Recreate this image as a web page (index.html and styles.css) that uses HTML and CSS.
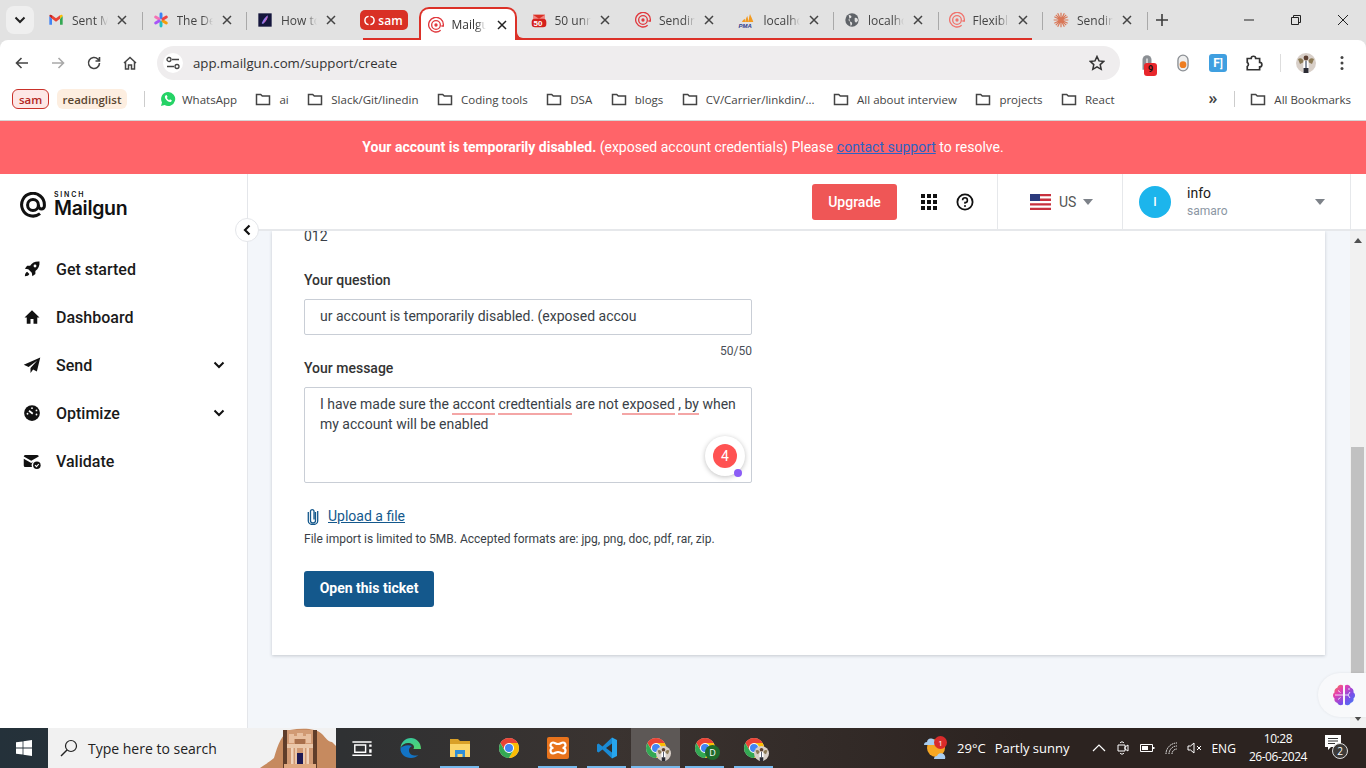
FILE: index.html
```html
<!DOCTYPE html>
<html lang="en">
<head>
  <meta charset="UTF-8">
  <title>Mailgun - Support</title>
  <link rel="stylesheet" href="styles.css">
</head>
<body>
  <!-- Shared icons -->
  <svg class="sprite" xmlns="http://www.w3.org/2000/svg">
    <symbol id="folder" viewBox="0 0 16 16"><path d="M1.500 3.500h4.200l1.600 1.600h7.200v8.400h-13z" fill="none" stroke="currentColor" stroke-width="1.500"/></symbol>
    <symbol id="close" viewBox="0 0 10 10"><path d="M1 1l8 8M9 1l-8 8" fill="none" stroke="currentColor" stroke-width="1.500"/></symbol>
    <symbol id="mg" viewBox="0 0 24 24"><path d="M18.500 20A10.500 10.500 0 1 1 22.500 12v1a2.700 2.700 0 0 1-5.400 0v-1" fill="none" stroke="currentColor" stroke-width="2.800"/><circle cx="12" cy="12" r="5" fill="none" stroke="currentColor" stroke-width="2.800"/></symbol>
    <symbol id="mg-tab" viewBox="0 0 24 24"><path d="M19 20A11 11 0 1 1 23 12v1.500h-3" fill="none" stroke="currentColor" stroke-width="2"/><circle cx="12" cy="12" r="6.500" fill="none" stroke="currentColor" stroke-width="2"/><circle cx="12" cy="12" r="2.500" fill="currentColor"/></symbol>
    <symbol id="chrome" viewBox="0 0 24 24"><circle cx="12" cy="12" r="10" fill="#fff"/><path d="M3.340 7A10 10 0 0 1 20.660 7H12a5 5 0 0 0-4.330 7.500z" fill="#ea4335"/><path d="M20.660 7A10 10 0 0 1 12 22l4.330-7.500A5 5 0 0 0 12 7z" fill="#fbbc04"/><path d="M12 22A10 10 0 0 1 3.340 7l4.330 7.500a5 5 0 0 0 8.660 0z" fill="#34a853"/><circle cx="12" cy="12" r="4" fill="#4285f4"/></symbol>
    <symbol id="caret" viewBox="0 0 10 6"><path d="M0 0h10L5 6z" fill="currentColor"/></symbol>
    <symbol id="chev" viewBox="0 0 12 8"><path d="M1.500 1.500 6 6l4.500-4.500" fill="none" stroke="currentColor" stroke-width="2"/></symbol>
    <symbol id="profile" viewBox="0 0 20 20"><circle cx="10" cy="10" r="10" fill="#d8cfc8"/><path d="M2 6c3-2 5 0 6 3l-4 2zM18 6c-3-2-5 0-6 3l4 2z" fill="#8c7a55"/><circle cx="10" cy="5" r="2.400" fill="#5b3f31"/><path d="M7.500 8h5l.5 12H7z" fill="#fff"/><path d="M9.500 8h1v7h-1z" fill="#1f2a44"/><path d="M7.500 15h5v5h-5z" fill="#2b2b33"/></symbol>
  </svg>

  <!-- Tab strip -->
  <header class="tabstrip">
    <button class="tab-search"><svg class="ico-12"><use href="#chev"/></svg></button>
    <div class="tab">
      <svg class="tab-ico" viewBox="0 0 24 24"><path d="M2 6v13h4V10z" fill="#4285f4"/><path d="M18 10v9h4V6z" fill="#34a853"/><path d="M6 10V5l6 4.500L18 5v5l-6 4.500z" fill="#ea4335"/><path d="M2 6c0-2 2-2.500 4-1v5z" fill="#c5221f"/><path d="M22 6c0-2-2-2.500-4-1v5z" fill="#fbbc04"/></svg>
      <span class="tab-title">Sent Mail</span>
      <svg class="tab-x"><use href="#close"/></svg>
    </div>
    <div class="tab">
      <svg class="tab-ico" viewBox="0 0 24 24"><g fill="none" stroke-width="4.400" stroke-linecap="round"><path d="M12 3v6" stroke="#3b82f6"/><path d="M12 15v6" stroke="#22c1c3"/><path d="M4 7.500l5 3" stroke="#f472b6"/><path d="M15 13.500l5 3" stroke="#f59e0b"/><path d="M20 7.500l-5 3" stroke="#ef4444"/><path d="M9 13.500l-5 3" stroke="#a855f7"/></g></svg>
      <span class="tab-title">The Dev</span>
      <svg class="tab-x"><use href="#close"/></svg>
    </div>
    <div class="tab no-sep">
      <svg class="tab-ico" viewBox="0 0 24 24"><path d="M2 2h20v20H2z" fill="#14163c"/><path d="M16 5c1 4-2 9-7 13l-2-1c2-5 5-9 9-12z" fill="#8f7df0"/><path d="M15 7c0 3-2 6-5 9" stroke="#ef4f8b" fill="none"/></svg>
      <span class="tab-title">How to</span>
      <svg class="tab-x"><use href="#close"/></svg>
    </div>

    <div class="tab-group">
      <span class="group-chip"><svg class="ico-11" viewBox="0 0 12 12"><path d="M5 1.500C2 2 1 4 1 6s1 4 4 4.500M7 1.500c3 .5 4 2.500 4 4.500s-1 4-4 4.500" fill="none" stroke="#fff" stroke-width="1.600"/></svg>sam</span>
      <div class="tab active">
        <svg class="tab-ico mg-red"><use href="#mg-tab"/></svg>
        <span class="tab-title">Mailgun</span>
        <svg class="tab-x"><use href="#close"/></svg>
      </div>
      <div class="tab no-sep">
        <svg class="tab-ico" viewBox="0 0 24 24"><path d="M3 4h18v10H3z" fill="#ee8a86"/><path d="M3 4l9 6 9-6" fill="#d93025"/><rect x="1" y="10" width="22" height="13" rx="5" fill="#d5211c"/></svg>
        <span class="tab-badge">50</span>
        <span class="tab-title">50 unread</span>
        <svg class="tab-x"><use href="#close"/></svg>
      </div>
      <div class="tab no-sep">
        <svg class="tab-ico mg-red"><use href="#mg-tab"/></svg>
        <span class="tab-title">Sending</span>
        <svg class="tab-x"><use href="#close"/></svg>
      </div>
      <div class="tab">
        <svg class="tab-ico" viewBox="0 0 24 24"><path d="M3 15c1-3 3-4 4-5l1 5zM8 15c0-4 2-7 3-9l2 9zM13 15c0-4 1-9 2-12 1 3 4 8 5 12z" fill="#f29a1f"/></svg>
        <span class="tab-pma">PMA</span>
        <span class="tab-title">localhost</span>
        <svg class="tab-x"><use href="#close"/></svg>
      </div>
      <div class="tab">
        <svg class="tab-ico" viewBox="0 0 24 24"><circle cx="12" cy="12" r="10" fill="#5f6368"/><path d="M7 4c3 1 5 2 4 4s-4 1-4 4 4 2 5 4-1 4-2 5M16 9c3-1 5 1 5 4l-3 3-2-2z" fill="#e1e1e1"/></svg>
        <span class="tab-title">localhost</span>
        <svg class="tab-x"><use href="#close"/></svg>
      </div>
      <div class="tab">
        <svg class="tab-ico mg-salmon"><use href="#mg-tab"/></svg>
        <span class="tab-title">Flexible</span>
        <svg class="tab-x"><use href="#close"/></svg>
      </div>
    </div>

    <div class="tab">
      <svg class="tab-ico" viewBox="0 0 24 24"><path d="M12 1v22M1 12h22M4.200 4.200l15.600 15.600M19.800 4.200 4.200 19.800M7 2l10 20M17 2 7 22M2 7l20 10M22 7 2 17" stroke="#d97757" stroke-width="1.800"/></svg>
      <span class="tab-title">Sending</span>
      <svg class="tab-x"><use href="#close"/></svg>
    </div>
    <svg class="tab-new" viewBox="0 0 12 12"><path d="M6 0v12M0 6h12" stroke="#3c3c3c" stroke-width="1.600"/></svg>

    <div class="win-controls">
      <svg viewBox="0 0 12 12"><path d="M1 6h10" stroke="#222" stroke-width="1"/></svg>
      <svg viewBox="0 0 12 12"><path d="M1.500 3.500h7v7h-7zM3.500 3.500v-2h7v7h-2" fill="none" stroke="#222" stroke-width="1"/></svg>
      <svg viewBox="0 0 12 12"><path d="M1 1l10 10M11 1 1 11" stroke="#222" stroke-width="1"/></svg>
    </div>
  </header>

  <!-- Address bar -->
  <div class="toolbar">
    <svg class="tool" viewBox="0 0 16 16"><path d="M14 8H3M7.500 3 2.500 8l5 5" fill="none" stroke="#444" stroke-width="1.600"/></svg>
    <svg class="tool" viewBox="0 0 16 16"><path d="M2 8h11M8.500 3l5 5-5 5" fill="none" stroke="#a9a9a9" stroke-width="1.600"/></svg>
    <svg class="tool" viewBox="0 0 16 16"><path d="M13.500 8a5.500 5.500 0 1 1-1.600-3.900L13.500 6M13.500 2v4h-4" fill="none" stroke="#444" stroke-width="1.600"/></svg>
    <svg class="tool" viewBox="0 0 16 16"><path d="M2 8l6-5.500L14 8M3.500 7v7h3v-4h3v4h3V7" fill="none" stroke="#444" stroke-width="1.500"/></svg>
    <div class="omnibox">
      <span class="site-info"><svg class="ico-14" viewBox="0 0 14 14"><path d="M6 3.500h7M1 10.500h7" stroke="#444" stroke-width="1.400"/><circle cx="3" cy="3.500" r="2" fill="none" stroke="#444" stroke-width="1.300"/><circle cx="11" cy="10.500" r="2" fill="none" stroke="#444" stroke-width="1.300"/></svg></span>
      <span class="url">app.mailgun.com/support/create</span>
      <svg class="star" viewBox="0 0 16 16"><path d="M8 1.500l2 4.400 4.800.5-3.600 3.200 1 4.700L8 11.900l-4.200 2.400 1-4.700L1.200 6.400 6 5.900z" fill="none" stroke="#333" stroke-width="1.500"/></svg>
    </div>
    <div class="extensions">
      <span class="ext ext-lock"><svg viewBox="0 0 16 16"><path d="M4 14V5a4 4 0 0 1 8 0v9z" fill="#8b8f94"/><path d="M7.500 4h1v4h-1z" fill="#fff"/></svg><b class="ext-count">9</b></span>
      <span class="ext"><svg viewBox="0 0 16 16"><rect x="3.500" y="1" width="9" height="14" rx="4.500" fill="#eee" stroke="#8b8f94" stroke-width="1.200"/><circle cx="8" cy="9.500" r="3" fill="#ee7d20"/></svg></span>
      <span class="ext ext-blue">F<i>]</i></span>
      <span class="ext"><svg viewBox="0 0 16 16"><path d="M2 4h3.500a2 2 0 0 1 4 0H13v3.500a2 2 0 0 1 0 4V14H2v-3a2 2 0 0 0 0-3.500z" fill="none" stroke="#333" stroke-width="1.500"/></svg></span>
      <span class="tool-sep"></span>
      <svg class="avatar-small"><use href="#profile"/></svg>
      <svg class="kebab" viewBox="0 0 4 16"><circle cx="2" cy="2.500" r="1.500" fill="#444"/><circle cx="2" cy="8" r="1.500" fill="#444"/><circle cx="2" cy="13.500" r="1.500" fill="#444"/></svg>
    </div>
  </div>

  <!-- Bookmarks -->
  <nav class="bookmarks">
    <span class="bm-chip chip-sam">sam</span>
    <span class="bm-chip chip-reading">readinglist</span>
    <span class="bm-sep"></span>
    <span class="bm bm-wa"><svg class="bm-ico" viewBox="0 0 16 16"><path d="M8 1a7 7 0 0 0-6 10.500L1 15l3.600-1A7 7 0 1 0 8 1z" fill="#25d366"/><path d="M5.500 4.500c-1 1-.8 2.500.7 4.300s3.300 2.600 4.500 2.100c1-.4 1.200-1.200 1-1.600L10 8.300l-.8.900c-1-.4-2-1.400-2.400-2.400l.8-.8-1-2z" fill="#fff"/></svg>WhatsApp</span>
    <span class="bm"><svg class="bm-ico"><use href="#folder"/></svg>ai</span>
    <span class="bm"><svg class="bm-ico"><use href="#folder"/></svg>Slack/Git/linedin</span>
    <span class="bm"><svg class="bm-ico"><use href="#folder"/></svg>Coding tools</span>
    <span class="bm"><svg class="bm-ico"><use href="#folder"/></svg>DSA</span>
    <span class="bm"><svg class="bm-ico"><use href="#folder"/></svg>blogs</span>
    <span class="bm"><svg class="bm-ico"><use href="#folder"/></svg>CV/Carrier/linkdin/...</span>
    <span class="bm"><svg class="bm-ico"><use href="#folder"/></svg>All about interview</span>
    <span class="bm"><svg class="bm-ico"><use href="#folder"/></svg>projects</span>
    <span class="bm"><svg class="bm-ico"><use href="#folder"/></svg>React</span>
    <span class="bm-more">&raquo;</span>
    <span class="bm-sep"></span>
    <span class="bm bm-all"><svg class="bm-ico"><use href="#folder"/></svg>All Bookmarks</span>
  </nav>

  <!-- Account warning -->
  <div class="banner">
    <strong>Your account is temporarily disabled.</strong>&nbsp;(exposed account credentials) Please&nbsp;<a href="#" class="banner-link">contact support</a>&nbsp;to resolve.
  </div>

  <div class="app">
    <!-- Sidebar -->
    <aside class="sidebar">
      <div class="logo">
        <svg class="logo-at"><use href="#mg"/></svg>
        <div class="logo-text">
          <span class="logo-sinch">SINCH</span>
          <span class="logo-name">Mailgun</span>
        </div>
      </div>
      <ul class="side-nav">
        <li class="side-item">
          <svg class="side-ico" viewBox="0 0 24 24"><path d="M22 2c-5.500-.5-10 1.500-12.500 5.500H5.500L2.500 11.500l4.500.8 4.700 4.700.8 4.500 4-3v-4c4-2.500 6-7 5.500-12.500z"/><circle cx="16" cy="8" r="1.900" fill="#fff"/><path d="M5.500 15.500c-2 1-3 3-3 6 3 0 5-1 6-3z"/></svg>
          Get started
        </li>
        <li class="side-item">
          <svg class="side-ico" viewBox="0 0 24 24"><path d="M10 21v-6.500h4V21h5v-8.500h3L12 3 2 12.500h3V21z"/></svg>
          Dashboard
        </li>
        <li class="side-item">
          <svg class="side-ico" viewBox="0 0 24 24"><path d="M23 2 1 11.500l6.500 3L19 6l-9 10v6.500l3.500-4.500 5 2.500z"/></svg>
          Send
          <svg class="side-chev"><use href="#chev"/></svg>
        </li>
        <li class="side-item">
          <svg class="side-ico" viewBox="0 0 24 24"><circle cx="12" cy="12" r="10.500"/><path d="M8 9l5 4" stroke="#fff" stroke-width="2.400"/><circle cx="6" cy="13" r="1.200" fill="#fff"/><circle cx="12" cy="5.500" r="1.200" fill="#fff"/><circle cx="18" cy="8.500" r="1.200" fill="#fff"/><circle cx="18" cy="14" r="1.200" fill="#fff"/></svg>
          Optimize
          <svg class="side-chev"><use href="#chev"/></svg>
        </li>
        <li class="side-item">
          <svg class="side-ico" viewBox="0 0 24 24"><path d="M3 4h16a2 2 0 0 1 2 2L11 11.500 1 6a2 2 0 0 1 2-2zM1 9l10 5.500 3-1.600A6 6 0 0 0 12 20H3a2 2 0 0 1-2-2z"/><circle cx="18.500" cy="17.500" r="5"/><path d="M16 17.500l2 2 3-3.500" fill="none" stroke="#fff" stroke-width="1.500"/></svg>
          Validate
        </li>
      </ul>
      <button class="collapse-btn"><svg viewBox="0 0 8 12"><path d="M6.500 1.500 2 6l4.500 4.500" fill="none" stroke="#111" stroke-width="2.200"/></svg></button>
    </aside>

    <main class="main">
      <!-- Top bar -->
      <div class="topbar">
        <button class="upgrade-btn">Upgrade</button>
        <svg class="grid-ico" viewBox="0 0 16 16"><path d="M0 0h4v4H0zM6 0h4v4H6zM12 0h4v4h-4zM0 6h4v4H0zM6 6h4v4H6zM12 6h4v4h-4zM0 12h4v4H0zM6 12h4v4H6zM12 12h4v4h-4z" fill="#111"/></svg>
        <svg class="help-ico" viewBox="0 0 18 18"><circle cx="9" cy="9" r="7.600" fill="none" stroke="#111" stroke-width="1.800"/><path d="M6.600 7.200A2.400 2.400 0 1 1 9 9.600v1.200" fill="none" stroke="#111" stroke-width="1.600"/><circle cx="9" cy="13.100" r="1" fill="#111"/></svg>
        <div class="region">
          <svg class="flag" viewBox="0 0 21 16"><path d="M0 0h21v16H0z" fill="#fff"/><path d="M0 0h21v2.300H0zM0 4.600h21v2.300H0zM0 9.200h21v2.300H0zM0 13.800h21V16H0z" fill="#c8313e"/><path d="M0 0h10v7H0z" fill="#2b3a7c"/></svg>
          US
          <svg class="caret"><use href="#caret"/></svg>
        </div>
        <div class="account">
          <span class="avatar">I</span>
          <div class="account-text">
            <span class="account-name">info</span>
            <span class="account-org">samaro</span>
          </div>
          <svg class="caret"><use href="#caret"/></svg>
        </div>
      </div>

      <div class="page-row">
        <div class="content">
          <!-- Ticket form -->
          <section class="card">
            <p class="cut-line">012</p>
            <label class="field-label first">Your question</label>
            <div class="input-box">ur account is temporarily disabled. (exposed accou</div>
            <div class="counter">50/50</div>
            <label class="field-label">Your message</label>
            <div class="textarea-box">
              I have made sure the <u class="spell">accont</u> <u class="spell">credtentials</u> are not <u class="spell">exposed</u> <u class="spell">, by</u> when my account will be enabled
              <span class="grammar-badge"><span class="grammar-count">4</span><i class="grammar-dot"></i></span>
            </div>
            <div class="upload-row">
              <svg class="clip" viewBox="0 0 12 18"><path d="M8.500 5v8.500a2.500 2.500 0 0 1-5 0V4a1.800 1.800 0 0 1 3.500 0v8.500M1.300 5v9a4.700 3.600 0 0 0 9.400 0V4" fill="none" stroke="#14588c" stroke-width="1.300"/></svg>
              <a href="#" class="upload-link">Upload a file</a>
            </div>
            <p class="hint">File import is limited to 5MB. Accepted formats are: jpg, png, doc, pdf, rar, zip.</p>
            <button class="submit-btn">Open this ticket</button>
          </section>
        </div>
        <div class="scrollbar">
          <svg class="sb-arrow" viewBox="0 0 8 5"><path d="M4 0l4 5H0z" fill="#505050"/></svg>
          <div class="sb-track"><div class="sb-thumb"></div></div>
          <svg class="sb-arrow" viewBox="0 0 8 5"><path d="M0 0h8L4 5z" fill="#505050"/></svg>
        </div>
      </div>
    </main>

    <!-- Floating helper -->
    <div class="brain-widget">
      <svg viewBox="0 0 24 22"><defs><linearGradient id="brainGrad" x1="0" y1="0" x2="1" y2="1"><stop offset="0" stop-color="#f5883a"/><stop offset=".3" stop-color="#e63fb0"/><stop offset=".65" stop-color="#7b4de8"/><stop offset="1" stop-color="#3b82f6"/></linearGradient></defs><path d="M11 1.500v19c-2.500 1.500-5 .5-5.500-1.500-2.500-.5-3.500-2.500-3-4.500C.5 13 .5 9.500 2.500 8.500 2 6 3.500 4 5.500 3.500c.5-2.500 3.500-3.500 5.500-2zM13 1.500v19c2.500 1.500 5 .5 5.500-1.500 2.500-.5 3.500-2.500 3-4.500 2-1.500 2-5 0-6C22 6 20.500 4 18.500 3.500c-.5-2.500-3.500-3.500-5.500-2z" fill="url(#brainGrad)"/><path d="M3 11h8M6 6.500l2.500 2M6 15.500l2.500-2M13 11h3l2-3M16 11l2 3M18 5h-2" fill="none" stroke="#fff" stroke-width=".8"/></svg>
    </div>
  </div>

  <!-- Windows taskbar -->
  <footer class="taskbar">
    <div class="start"><svg viewBox="0 0 16 16"><path d="M0 2.300 6.600 1.400v6.200H0zM7.400 1.300 16 0v7.600H7.400zM0 8.400h6.600v6.200L0 13.700zM7.400 8.400H16V16l-8.600-1.300z" fill="#fff"/></svg></div>
    <div class="search">
      <svg class="search-ico" viewBox="0 0 18 18"><circle cx="11" cy="7" r="5.500" fill="none" stroke="#222" stroke-width="1.200"/><path d="M7 11l-6 6" stroke="#222" stroke-width="1.400"/></svg>
      <span class="search-text">Type here to search</span>
      <svg class="petra" viewBox="0 0 76 40"><path d="M0 40c6-4 9-6 14-10C18 16 22 6 30 2c12-2 26-2 32 4 4 4 6 8 10 8l4 4v22z" fill="#c68a5f"/><path d="M23 2h34v38H23z" fill="#5f3d2a"/><path d="M27 2h26v38H27z" fill="#d19a74"/><path d="M29 6h5v9h-5zM46 6h5v9h-5z" fill="#e8bfa0"/><path d="M37 5h6v3h3v3h-12v-3h3z" fill="#e8bfa0"/><path d="M35 11h10v5H35z" fill="#a86f4c"/><path d="M27 16h26v4H27z" fill="#eac7aa"/><path d="M31 20h2.500v16H31zM46.500 20H49v16h-2.500z" fill="#f0d3bb"/><path d="M35 20h2v16h-2zM43 20h2v16h-2z" fill="#eac7aa"/><path d="M37 25h6v11h-6z" fill="#1d1a55"/><path d="M24 36h32v4H24z" fill="#e0a980"/></svg>
    </div>
    <div class="task-icons">
      <span class="task"><svg class="task-svg" viewBox="0 0 20 20"><path d="M2 5h16M2 16h16M4 7.500h9v6H4z" fill="none" stroke="#fff" stroke-width="1.200"/><path d="M16 7h2v2h-2zM16 11h2v3h-2z" fill="#fff"/></svg></span>
      <span class="task"><svg class="task-svg" viewBox="0 0 24 24"><defs><linearGradient id="edgeGrad" x1="0" y1="0" x2="1" y2="1"><stop offset="0" stop-color="#2fc4a8"/><stop offset="1" stop-color="#55d66b"/></linearGradient></defs><path d="M22 13C22 6 17 2 12 2 6 2 2 6.500 1.500 12 3 8.500 6 7 9 7c3.500 0 6 2 6 4 0 1-.5 1.500-.5 2H22z" fill="url(#edgeGrad)"/><path d="M1.500 12C1 18 6 22 12 22c3 0 5.500-1 7.500-3-4 1.500-9 0-9.500-4-.2-2.500 1-4 3-5-5-2-10 .5-11.500 2z" fill="#1273c4"/></svg></span>
      <span class="task open"><svg class="task-svg" viewBox="0 0 24 24"><path d="M2 3h8l2 2h10v15H2z" fill="#d9a028"/><path d="M2 8h20v13H2z" fill="#fbd56a"/><path d="M7 14h10v7h-2.500v-3h-5v3H7z" fill="#2f8fd8"/></svg></span>
      <span class="task"><svg class="task-svg"><use href="#chrome"/></svg></span>
      <span class="task open"><svg class="task-svg" viewBox="0 0 24 24"><rect x="1" y="1" width="22" height="22" rx="2" fill="#e8731c"/><path d="M7 6.500c-2 0-2.500 2-2.500 3s1.500 2.500 3 2.500c-1.500 0-3 1-3 2.500s1 3 2.500 3c2 0 2.500-1.500 5-1.500s3 1.500 5 1.500c1.500 0 2.500-1.500 2.500-3s-1.500-2.500-3-2.500c1.500 0 3-1.500 3-2.500s-.5-3-2.500-3c-2 0-2.500 1.500-5 1.500S9 6.500 7 6.500z" fill="none" stroke="#fff" stroke-width="2.200"/></svg></span>
      <span class="task open"><svg class="task-svg" viewBox="0 0 24 24"><path d="M17 1.500 7.500 10.500 3.500 7.500 2 8.500v7l1.500 1 4-3L17 22.500z" fill="#1a8ad4"/><path d="M17 1.500 22 4v16l-5 2.500z" fill="#27a6ee"/><path d="M17 7.500 11 12l6 4.500z" fill="#2f2d2c"/></svg></span>
      <span class="task open current"><svg class="task-svg"><use href="#chrome"/></svg><svg class="task-profile"><use href="#profile"/></svg></span>
      <span class="task open"><svg class="task-svg"><use href="#chrome"/></svg><b class="task-d">D</b></span>
      <span class="task open"><svg class="task-svg"><use href="#chrome"/></svg><svg class="task-profile"><use href="#profile"/></svg></span>
    </div>
    <div class="tray">
      <div class="weather">
        <svg class="weather-ico" viewBox="0 0 24 30"><circle cx="13" cy="15" r="9" fill="#f5a623"/><path d="M1 12a3 3 0 0 1 3-3 4 4 0 0 1 8 1v2zM11 26a3 3 0 0 1 3-3 4 4 0 0 1 8 3z" fill="#a9cdf0"/></svg>
        <b class="weather-badge">1</b>
        <span class="weather-temp">29°C</span>
        <span>Partly sunny</span>
      </div>
      <svg class="tray-ico chev-up" viewBox="0 0 14 8"><path d="M1 7l6-6 6 6" fill="none" stroke="#fff" stroke-width="1.200"/></svg>
      <svg class="tray-ico" viewBox="0 0 16 16"><path d="M3 5h7v6H3zM10 7l3-2v6l-3-2zM5 3c1-1.500 3-1.500 4 0M5 13c1 1.500 3 1.500 4 0" fill="none" stroke="#fff"/></svg>
      <svg class="tray-ico" viewBox="0 0 16 16"><path d="M1.500 4.500h12v7h-12z" fill="none" stroke="#fff"/><path d="M3 6h6v4H3z" fill="#fff"/><path d="M14 7h1.500v2H14z" fill="#fff"/></svg>
      <svg class="tray-ico" viewBox="0 0 16 16"><path d="M3 14a11 11 0 0 1 11-11M6 14a8 8 0 0 1 8-8M9 14a5 5 0 0 1 5-5" fill="none" stroke="#fff" stroke-dasharray="1.500 .8"/></svg>
      <svg class="tray-ico" viewBox="0 0 16 16"><path d="M1 6h2.500L7 3v10L3.500 10H1zM10 6l4 4M14 6l-4 4" fill="none" stroke="#fff"/></svg>
      <span class="lang">ENG</span>
      <div class="clock"><span>10:28</span><span>26-06-2024</span></div>
      <div class="notify">
        <svg viewBox="0 0 16 16"><path d="M0 0h16v12H6l-3 3v-3H0z" fill="#fff"/><path d="M3 3.500h10M3 6h10M3 8.500h7" stroke="#333"/></svg>
        <b class="notify-count">2</b>
      </div>
    </div>
  </footer>
</body>
</html>
```

FILE: styles.css
```css
/* General */
* {
  box-sizing: border-box;
}

html, body {
  height: 100%;
}

body {
  margin: 0;
  width: 1366px;
  height: 768px;
  overflow: hidden;
  display: flex;
  flex-direction: column;
  font-family: "Roboto", "Liberation Sans", sans-serif;
  color: #333;
  background: #e2e2e2;
}

.sprite {
  display: none;
}

button {
  font-family: inherit;
  border: none;
  cursor: pointer;
}

.ico-12 {
  width: 12px;
  height: 8px;
}

.ico-11 {
  width: 11px;
  height: 11px;
}

.ico-14 {
  width: 14px;
  height: 14px;
}

/* Tab strip */
.tabstrip {
  height: 40px;
  flex: none;
  display: flex;
  align-items: flex-end;
  background: #e2e2e2;
  font-family: "Open Sans", sans-serif;
  font-size: 12px;
  color: #444;
  padding-left: 6px;
}

.tab-search {
  width: 28px;
  height: 28px;
  margin: 0 4px 6px 0;
  border-radius: 8px;
  background: #efefef;
  color: #222;
  display: flex;
  align-items: center;
  justify-content: center;
}

.tab {
  position: relative;
  width: 104.500px;
  height: 40px;
  flex: none;
  display: flex;
  align-items: center;
  padding: 0 0 0 10px;
}

.tab::after {
  content: "";
  position: absolute;
  right: 0;
  top: 12px;
  height: 18px;
  width: 1px;
  background: #a9a9a9;
}

.tab.no-sep::after {
  display: none;
}

.tab-ico {
  width: 16px;
  height: 16px;
  flex: none;
}

.mg-red {
  color: #e0393e;
}

.mg-salmon {
  color: #f0746e;
}

.tab-title {
  width: 36px;
  margin-left: 8px;
  overflow: hidden;
  white-space: nowrap;
  -webkit-mask-image: linear-gradient(to right, #000 70%, transparent);
  mask-image: linear-gradient(to right, #000 70%, transparent);
}

.tab-x {
  width: 10px;
  height: 10px;
  margin-left: 9px;
  color: #444;
}

.tab-badge {
  position: absolute;
  left: 13px;
  top: 19px;
  font: bold 8px "Liberation Sans", sans-serif;
  color: #fff;
}

.tab-pma {
  position: absolute;
  left: 9px;
  top: 23px;
  font: italic bold 6px "Liberation Sans", sans-serif;
  color: #2f3d8c;
}

.tab-group {
  position: relative;
  display: flex;
  align-items: flex-end;
}

.tab-group::after {
  content: "";
  position: absolute;
  left: 11px;
  right: 11px;
  bottom: 0;
  height: 2px;
  background: #dc3128;
}

.group-chip {
  width: 48px;
  height: 20px;
  margin: 0 11px 10px 8px;
  border-radius: 5px;
  background: #d93025;
  color: #fff;
  font-weight: 600;
  font-size: 12px;
  display: flex;
  align-items: center;
  justify-content: center;
  gap: 3px;
}

.tab.active {
  z-index: 1;
  width: 98px;
  height: 33px;
  padding-left: 7px;
  margin-right: 4px;
  background: #fff;
  color: #333;
  border: 2px solid #dc3128;
  border-bottom: none;
  border-radius: 10px 10px 0 0;
}

/* flared corner where the active tab meets the group line */
.tab.active::after {
  display: block;
  left: 100%;
  right: auto;
  top: auto;
  bottom: 0;
  width: 8px;
  height: 8px;
  background: #e2e2e2;
  border-left: 2px solid #dc3128;
  border-bottom: 2px solid #dc3128;
  border-bottom-left-radius: 8px;
}

.tab.active .tab-title {
  width: 34px;
}

.tab.active .tab-x {
  margin-left: 11px;
  color: #222;
}

.tab-new {
  width: 12px;
  height: 12px;
  margin: 0 0 14px 8px;
}

.win-controls {
  margin-left: auto;
  height: 40px;
  display: flex;
  align-items: center;
  padding-right: 17px;
  gap: 35px;
}

.win-controls svg {
  width: 12px;
  height: 12px;
}

/* Address bar */
.toolbar {
  height: 46px;
  flex: none;
  background: #fff;
  border-radius: 8px 8px 0 0;
  display: flex;
  align-items: flex-start;
  padding: 6px 0 0 14px;
}

.tool {
  width: 16px;
  height: 16px;
  flex: none;
  margin: 9px 20px 0 0;
}

.omnibox {
  width: 963px;
  height: 34px;
  margin-left: -1px;
  background: #efedee;
  border-radius: 17px;
  display: flex;
  align-items: center;
  padding: 0 15px 0 6px;
  font-family: "Open Sans", sans-serif;
  font-size: 13.250px;
  color: #333;
}

.site-info {
  width: 20px;
  height: 20px;
  border-radius: 50%;
  background: #fff;
  display: flex;
  align-items: center;
  justify-content: center;
}

.url {
  margin-left: 10px;
}

.star {
  width: 16px;
  height: 16px;
  margin-left: auto;
}

.extensions {
  display: flex;
  align-items: center;
  height: 34px;
  margin-left: 18px;
}

.ext {
  position: relative;
  width: 18px;
  height: 18px;
  margin-right: 17.500px;
  display: flex;
  align-items: center;
  justify-content: center;
}

.ext svg {
  width: 18px;
  height: 18px;
}

.ext-count {
  position: absolute;
  left: 6px;
  top: 9px;
  width: 13px;
  height: 13px;
  border-radius: 3px;
  background: #e8272c;
  color: #111;
  font-size: 9px;
  line-height: 13px;
  text-align: center;
}

.ext-blue {
  background: #3f9fe0;
  border-radius: 3px;
  color: #fff;
  font-weight: 700;
  font-size: 12px;
}

.ext-blue i {
  font-style: normal;
  font-size: 10px;
}

.tool-sep {
  width: 1px;
  height: 18px;
  margin: 0 15px 0 0;
  background: #ddd;
}

.avatar-small {
  width: 20px;
  height: 20px;
}

.kebab {
  width: 4px;
  height: 16px;
  margin-left: 24px;
}

/* Bookmarks */
.bookmarks {
  height: 35px;
  flex: none;
  display: flex;
  align-items: center;
  padding: 0 15px 8px 12px;
  background: #fff;
  border-bottom: 1px solid #d5d5d5;
  font-family: "Open Sans", sans-serif;
  font-size: 11.500px;
  color: #444;
}

.bm-chip {
  height: 20px;
  padding: 0 5px;
  border-radius: 6px;
  display: flex;
  align-items: center;
  font-weight: 600;
}

.chip-sam {
  width: 37px;
  justify-content: center;
  border: 1px solid #c9312a;
  background: #fde7e6;
  color: #b3261e;
}

.chip-reading {
  width: 70px;
  justify-content: center;
  margin-left: 8px;
  background: #fdeee0;
  color: #5a4630;
}

.bm-sep {
  width: 1px;
  height: 16px;
  margin: 0 15px 0 17px;
  background: #ccc;
}

.bm {
  display: flex;
  align-items: center;
  gap: 8px;
  margin-right: 18.500px;
  white-space: nowrap;
}

.bm-wa {
  gap: 6px;
}

.bm-ico {
  width: 16px;
  height: 16px;
  flex: none;
  color: #444;
}

.bm-more {
  margin-left: auto;
  font-size: 16px;
  font-weight: 600;
  line-height: 16px;
  padding-bottom: 3px;
}

.bm-all {
  margin-right: 0;
}

/* Account warning */
.banner {
  height: 53px;
  flex: none;
  display: flex;
  align-items: center;
  justify-content: center;
  padding-bottom: 2px;
  background: #ff6469;
  color: #fff;
  font-size: 14px;
}

.banner-link {
  color: #2b62c4;
  text-decoration: underline;
}

/* App layout */
.app {
  position: relative;
  flex: 1;
  min-height: 0;
  display: flex;
}

.sidebar {
  position: relative;
  width: 248px;
  flex: none;
  background: #fff;
  border-right: 1px solid #e4e6ea;
}

.logo {
  height: 57px;
  display: flex;
  align-items: center;
  padding: 4px 0 0 20px;
  color: #111;
}

.logo-at {
  width: 26px;
  height: 26px;
  color: #111;
}

.logo-text {
  display: flex;
  flex-direction: column;
  margin-left: 8px;
  font-family: "Inter", sans-serif;
}

.logo-sinch {
  font-size: 7px;
  line-height: 8px;
  letter-spacing: 1.800px;
  font-weight: 600;
}

.logo-name {
  font-size: 19.500px;
  line-height: 19px;
  font-weight: 600;
  letter-spacing: -0.300px;
}

.side-nav {
  list-style: none;
  margin: 14px 0 0;
  padding: 0;
}

.side-item {
  height: 48px;
  display: flex;
  align-items: center;
  padding: 0 22px 0 23px;
  font-size: 16px;
  font-weight: 500;
  color: #1a1a1a;
}

.side-ico {
  width: 18px;
  height: 18px;
  margin-right: 15px;
  fill: #111;
  flex: none;
}

.side-chev {
  width: 12px;
  height: 8px;
  margin-left: auto;
  color: #111;
}

.collapse-btn {
  position: absolute;
  left: 235px;
  top: 44px;
  width: 24px;
  height: 24px;
  padding: 0;
  border-radius: 50%;
  border: 1px solid #e4e6ea;
  background: #fff;
  display: flex;
  align-items: center;
  justify-content: center;
  z-index: 2;
}

.collapse-btn svg {
  width: 8px;
  height: 12px;
}

/* Top bar */
.main {
  flex: 1;
  min-width: 0;
  display: flex;
  flex-direction: column;
  background: #fff;
}

.topbar {
  height: 57px;
  flex: none;
  display: flex;
  align-items: center;
  justify-content: flex-end;
  padding-right: 15px;
  border-bottom: 2px solid #e6e8eb;
}

.upgrade-btn {
  width: 85px;
  height: 36px;
  background: #ef5656;
  border-radius: 3px;
  color: #fff;
  font-size: 14px;
  font-weight: 500;
}

.grid-ico {
  width: 16px;
  height: 16px;
  margin-left: 24px;
}

.help-ico {
  width: 18px;
  height: 18px;
  margin-left: 19px;
}

.region {
  width: 126px;
  height: 55px;
  margin-left: 23px;
  padding-left: 32px;
  display: flex;
  align-items: center;
  border-left: 1px solid #e6e8eb;
  border-right: 1px solid #e6e8eb;
  font-size: 14px;
  color: #555;
}

.flag {
  width: 21px;
  height: 16px;
  margin-right: 8px;
}

.caret {
  width: 10px;
  height: 6px;
  color: #7d8289;
  margin-left: 7px;
}

.account {
  width: 228px;
  height: 55px;
  display: flex;
  align-items: center;
  padding: 0 25px 0 16px;
  border-right: 1px solid #e6e8eb;
}

.avatar {
  width: 32px;
  height: 32px;
  border-radius: 50%;
  background: #1cb5ec;
  color: #fff;
  font-size: 12px;
  font-weight: 500;
  display: flex;
  align-items: center;
  justify-content: center;
}

.account-text {
  display: flex;
  flex-direction: column;
  margin-left: 16px;
}

.account-name {
  font-size: 14px;
  line-height: 18px;
  color: #1a1a1a;
}

.account-org {
  font-size: 12px;
  line-height: 18px;
  color: #8b96a3;
}

.account .caret {
  margin-left: auto;
}

/* Page area */
.page-row {
  flex: 1;
  min-height: 0;
  display: flex;
}

.content {
  flex: 1;
  background: #f3f6fa;
  padding-left: 24px;
  overflow: hidden;
}

.card {
  width: 1053px;
  height: 424px;
  padding: 0 32px;
  background: #fff;
  box-shadow: 0 1px 3px rgba(60, 70, 85, 0.25);
}

.cut-line {
  margin: 0;
  font-size: 14px;
  line-height: 11px;
  color: #3a3f47;
}

.field-label {
  display: block;
  margin: 0 0 10px;
  font-size: 14px;
  line-height: 18px;
  font-weight: 500;
  color: #333;
}

.field-label.first {
  margin-top: 29px;
}

.input-box {
  width: 448px;
  height: 36px;
  padding: 0 15px 2px;
  display: flex;
  align-items: center;
  border: 1px solid #c9ced6;
  border-radius: 2px;
  font-size: 14px;
  color: #3a3f47;
}

.counter {
  width: 448px;
  margin: 8px 0 0;
  height: 16px;
  font-size: 12px;
  line-height: 16px;
  text-align: right;
  color: #4a4f57;
}

.counter + .field-label {
  margin-top: 0;
}

.textarea-box {
  position: relative;
  width: 448px;
  height: 96px;
  padding: 6px 15px;
  border: 1px solid #c9ced6;
  border-radius: 2px;
  font-size: 14px;
  line-height: 20px;
  color: #3a3f47;
}

.spell {
  text-decoration: none;
  border-bottom: 2px solid #f4a6a6;
  padding-bottom: 1px;
}

.grammar-badge {
  position: absolute;
  right: 6px;
  bottom: 6px;
  width: 40px;
  height: 40px;
  border-radius: 50%;
  background: #fff;
  box-shadow: 0 1px 5px rgba(0, 0, 0, 0.25);
  display: flex;
  align-items: center;
  justify-content: center;
}

.grammar-count {
  width: 24px;
  height: 24px;
  border-radius: 50%;
  background: #ff5252;
  color: #fff;
  font-size: 14px;
  line-height: 24px;
  text-align: center;
}

.grammar-dot {
  position: absolute;
  right: 3px;
  bottom: -1px;
  width: 8px;
  height: 8px;
  border-radius: 50%;
  background: #8b5cf6;
}

.upload-row {
  display: flex;
  align-items: center;
  margin-top: 23px;
  height: 20px;
  padding-left: 3px;
}

.clip {
  width: 12px;
  height: 18px;
  margin-right: 9px;
}

.upload-link {
  font-size: 14px;
  color: #14588c;
  text-decoration: underline;
}

.hint {
  margin: 5px 0 0;
  font-size: 12px;
  line-height: 16px;
  color: #3a3f47;
}

.submit-btn {
  display: block;
  width: 130px;
  height: 36px;
  margin-top: 24px;
  padding: 0 0 2px;
  background: #14588c;
  border-radius: 3px;
  color: #fff;
  font-size: 14px;
  font-weight: 700;
}

/* Scrollbar */
.scrollbar {
  width: 16px;
  flex: none;
  background: #f1f1f1;
  display: flex;
  flex-direction: column;
  align-items: center;
  padding: 7px 0;
}

.sb-arrow {
  width: 8px;
  height: 5px;
  flex: none;
}

.sb-track {
  flex: 1;
  width: 100%;
  padding-top: 204px;
  padding-bottom: 8px;
}

.sb-thumb {
  height: 100%;
  margin: 0 2px 0 1px;
  background: #c1c1c1;
}

/* Floating helper */
.brain-widget {
  position: absolute;
  right: 0;
  top: 499px;
  width: 48px;
  height: 44px;
  padding-left: 14px;
  display: flex;
  align-items: center;
  border-radius: 22px 0 0 22px;
  background: #f8f9fb;
  box-shadow: 0 0 3px rgba(0, 0, 0, 0.08);
}

.brain-widget svg {
  width: 24px;
  height: 22px;
}

/* Taskbar */
.taskbar {
  height: 40px;
  flex: none;
  display: flex;
  align-items: stretch;
  background: linear-gradient(to right, #24313a, #2f3133 25%, #3a3330 45%, #2c2320 75%);
  color: #fff;
  font-family: "Open Sans", sans-serif;
  font-size: 13px;
}

.start {
  width: 48px;
  display: flex;
  align-items: center;
  justify-content: center;
}

.start svg {
  width: 16px;
  height: 16px;
}

.search {
  position: relative;
  width: 288px;
  display: flex;
  align-items: center;
  background: #f1f1f1;
  padding-left: 12px;
  color: #222;
  font-size: 14px;
}

.search-ico {
  width: 18px;
  height: 18px;
  margin-right: 10px;
}

.search-text {
  white-space: nowrap;
}

.petra {
  position: absolute;
  right: 0;
  top: 0;
  width: 76px;
  height: 40px;
}

.task-icons {
  display: flex;
  margin-left: 1px;
}

.task {
  position: relative;
  width: 49px;
  display: flex;
  align-items: center;
  justify-content: center;
}

.task.open::after {
  content: "";
  position: absolute;
  left: 5px;
  right: 5px;
  bottom: 0;
  height: 2px;
  background: #76b9ed;
}

.task.current {
  background: #5d5856;
}

.task.current::after {
  left: 0;
  right: 0;
}

.task-svg {
  width: 24px;
  height: 24px;
}

.task-profile {
  position: absolute;
  left: 25px;
  top: 17px;
  width: 15px;
  height: 17px;
}

.task-d {
  position: absolute;
  left: 25px;
  top: 17px;
  width: 15px;
  height: 15px;
  border-radius: 50%;
  background: #1e6b2c;
  font-size: 9px;
  font-weight: 400;
  line-height: 15px;
  text-align: center;
}

.tray {
  margin-left: auto;
  display: flex;
  align-items: center;
  padding-right: 19px;
}

.weather {
  position: relative;
  display: flex;
  align-items: center;
  gap: 9px;
  font-size: 13px;
  margin-right: 23px;
}

.weather-ico {
  width: 24px;
  height: 30px;
  margin-right: 1px;
}

.weather-badge {
  position: absolute;
  left: 11px;
  top: 3px;
  width: 13px;
  height: 13px;
  border-radius: 50%;
  background: #d92b2b;
  font-size: 8px;
  font-weight: 400;
  line-height: 13px;
  text-align: center;
}

.tray-ico {
  width: 16px;
  height: 16px;
  margin-right: 8px;
}

.chev-up {
  width: 14px;
  margin-right: 9px;
}

.lang {
  font-size: 12px;
  margin: 0 13px 0 0;
}

.clock {
  display: flex;
  flex-direction: column;
  align-items: center;
  font-size: 12px;
  letter-spacing: -0.450px;
  line-height: 18px;
}

.notify {
  position: relative;
  width: 22px;
  height: 26px;
  margin-left: 18px;
}

.notify svg {
  width: 16px;
  height: 16px;
}

.notify-count {
  position: absolute;
  left: 7px;
  top: 8px;
  width: 16px;
  height: 16px;
  border-radius: 50%;
  background: #3d3a38;
  border: 1px solid #ddd;
  font-size: 10px;
  line-height: 14px;
  text-align: center;
  font-weight: 500;
}
```
